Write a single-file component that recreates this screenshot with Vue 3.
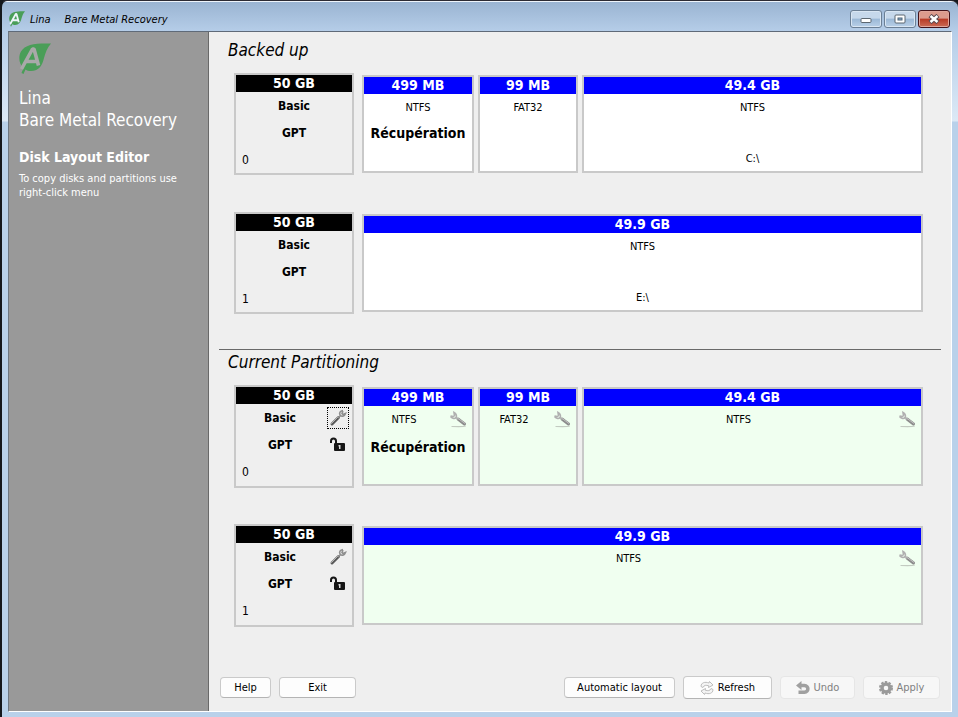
<script setup>
import { h } from 'vue'

const backedUp = [
  {
    id: 0,
    size: '50 GB',
    columns: '112px 100px minmax(0, 1fr)',
    parts: [
      { size: '499 MB', fs: 'NTFS', label: 'Récupération', mount: '' },
      { size: '99 MB', fs: 'FAT32', label: '', mount: '' },
      { size: '49.4 GB', fs: 'NTFS', label: '', mount: 'C:\\' },
    ],
  },
  {
    id: 1,
    size: '50 GB',
    columns: 'minmax(0, 1fr)',
    parts: [{ size: '49.9 GB', fs: 'NTFS', label: '', mount: 'E:\\' }],
  },
]

const current = backedUp.map((disk) => ({
  ...disk,
  parts: disk.parts.map((part) => ({ ...part, mount: '' })),
}))

const sections = [
  { key: 'backup', title: 'Backed up', editable: false, disks: backedUp },
  { key: 'current', title: 'Current Partitioning', editable: true, disks: current },
]

const BrandMark = () =>
  h('svg', { viewBox: '0 0 32 32', 'aria-hidden': 'true' }, [
    h('path', {
      fill: '#4a9e58',
      d: 'M32 0.5C28 5 26.500 10 25 15C23.500 22 20 28 12 28C9.500 28 8 27.500 6.500 26.500L4.500 31L2.500 30L4.500 25C0 21 -1 14 2 8.500C6 1 18 0 32 0.5Z',
    }),
    h('path', {
      fill: 'none',
      stroke: 'var(--mark-cut)',
      'stroke-width': '3.6',
      'stroke-linejoin': 'bevel',
      d: 'M2.500 26L13.500 6H15L19.500 22.500M7 18.500H18',
    }),
  ])

const WrenchIcon = () =>
  h('svg', { viewBox: '0 0 18 18', 'aria-hidden': 'true' }, [
    h('path', {
      fill: 'none',
      stroke: '#5a5a5a',
      'stroke-width': '3',
      'stroke-linecap': 'round',
      d: 'M3 15L9.500 8.500',
    }),
    h('path', {
      fill: 'none',
      stroke: '#b8b8b8',
      'stroke-width': '1',
      'stroke-linecap': 'round',
      d: 'M2.500 14.500L9 8',
    }),
    h('path', {
      fill: 'none',
      stroke: '#8f8f8f',
      'stroke-width': '1.6',
      d: 'M9 9L11.500 6.500M14 1.500C11 2 10 4 11 6C12.500 8 15.500 7.500 16.500 4.500L14 5.500L13 4.500L14 2',
    }),
  ])

const FlatWrenchIcon = () =>
  h('svg', { viewBox: '0 0 18 18', 'aria-hidden': 'true' }, [
    h('path', { fill: '#c3cbc1', d: 'M2 16H14Q17 15.500 17 16.500Q14 17.500 3 17Z' }),
    h('path', {
      fill: 'none',
      stroke: '#8c8c8c',
      'stroke-width': '3',
      'stroke-linecap': 'round',
      d: 'M9 9L15.500 14',
    }),
    h('path', {
      fill: 'none',
      stroke: '#c2c2c2',
      'stroke-width': '1',
      d: 'M8.500 8L16 13.500',
    }),
    h('path', {
      fill: 'none',
      stroke: '#b0b0b0',
      'stroke-width': '1.6',
      d: 'M1.500 6.500C3.500 9 6 9 7 7.500C8 6 7.500 4 5 2.500L5.500 5.500L4.500 6.500L1.500 6M6.500 7L9.500 9.500',
    }),
  ])

const PadlockIcon = () =>
  h('svg', { viewBox: '0 0 18 18', 'aria-hidden': 'true' }, [
    h('path', {
      fill: 'none',
      stroke: '#161616',
      'stroke-width': '2',
      d: 'M2 7V5C2 1.500 7 1.500 7 5V9',
    }),
    h('rect', { x: 5, y: 7, width: 11, height: 8, rx: 1, fill: '#161616' }),
    h('path', { fill: '#dcdcdc', d: 'M9.500 9H11.500V10.500L11.500 13H10V10.500H9.500Z' }),
  ])

const RefreshIcon = () =>
  h('svg', { viewBox: '0 0 14 14', 'aria-hidden': 'true' }, [
    h('path', {
      fill: '#f4f4f4',
      stroke: '#bdbdbd',
      d: 'M1 5.500C1 1.500 5 0.500 9 2L9.500 0.500L13 4L8.500 6.500L8.800 4.800C6 4 4 4 3 6.500Z',
    }),
    h('path', {
      fill: '#f4f4f4',
      stroke: '#bdbdbd',
      d: 'M13 8.500C13 12.500 9 13.500 5 12L4.500 13.500L1 10L5.500 7.500L5.200 9.200C8 10 10 10 11 7.500Z',
    }),
  ])

const UndoIcon = () =>
  h('svg', { viewBox: '0 0 14 14', 'aria-hidden': 'true' }, [
    h('path', { fill: '#a0a0a0', d: 'M0 4.500L5.500 0V9Z' }),
    h('path', {
      fill: 'none',
      stroke: '#a0a0a0',
      'stroke-width': '3.500',
      d: 'M4 4.500H8.500C13 4.500 13 11.200 8.500 11.200H2.500',
    }),
  ])

const GearIcon = () =>
  h('svg', { viewBox: '0 0 14 14', 'aria-hidden': 'true' }, [
    h('circle', { cx: 7, cy: 7, r: 4, fill: 'none', stroke: '#9a9a9a', 'stroke-width': '3.400' }),
    h('circle', {
      cx: 7,
      cy: 7,
      r: 6,
      fill: 'none',
      stroke: '#9a9a9a',
      'stroke-width': '2',
      'stroke-dasharray': '2.400 1.370',
    }),
  ])
</script>

<template>
  <div class="window">
    <header class="titlebar">
      <BrandMark class="titlebar-mark" />
      <span class="caption">Lina</span>
      <span class="caption caption-app">Bare Metal Recovery</span>
      <div class="window-controls">
        <button type="button" class="control" aria-label="Minimize">
          <svg viewBox="0 0 12 10" aria-hidden="true">
            <rect x="1" y="4.500" width="10" height="4" rx="1" fill="#fff" stroke="#5b6670" />
          </svg>
        </button>
        <button type="button" class="control" aria-label="Maximize">
          <svg viewBox="0 0 12 10" aria-hidden="true">
            <rect x="1" y="1" width="10" height="8" rx="1" fill="#fff" stroke="#5b6670" />
            <rect x="4" y="4" width="4" height="2" fill="#8fb0d0" stroke="#4d6479" />
          </svg>
        </button>
        <button type="button" class="control control-close" aria-label="Close">
          <svg viewBox="0 0 12 10" aria-hidden="true">
            <path d="M2 1.500L10 8.500M10 1.500L2 8.500" stroke="#5b4a50" stroke-width="4.500" />
            <path d="M2.500 2L9.500 8M9.500 2L2.500 8" stroke="#fff" stroke-width="2.500" />
          </svg>
        </button>
      </div>
    </header>

    <div class="client">
      <aside class="sidebar">
        <BrandMark class="sidebar-mark" />
        <h1 class="product">Lina<br />Bare Metal Recovery</h1>
        <h2 class="step">Disk Layout Editor</h2>
        <p class="hint">To copy disks and partitions use right-click menu</p>
      </aside>

      <main class="main">
        <section v-for="section in sections" :key="section.key" class="section" :class="section.key">
          <h2 class="section-title">{{ section.title }}</h2>
          <div class="disks">
            <div v-for="disk in section.disks" :key="disk.id" class="disk-row">
              <div class="disk">
                <div class="bar bar-disk">{{ disk.size }}</div>
                <div class="line strong">
                  <span class="text">Basic</span>
                  <button v-if="section.editable" type="button" class="tool" :class="{ focused: disk.id === 0 }" aria-label="Disk tools">
                    <WrenchIcon class="glyph" />
                  </button>
                </div>
                <div class="line strong">
                  <span class="text">GPT</span>
                  <button v-if="section.editable" type="button" class="tool" aria-label="Lock disk">
                    <PadlockIcon class="glyph" />
                  </button>
                </div>
                <div class="line number">{{ disk.id }}</div>
              </div>
              <div class="parts" :style="{ gridTemplateColumns: disk.columns }">
                <div v-for="part in disk.parts" :key="part.size" class="part">
                  <div class="bar">{{ part.size }}</div>
                  <div class="line">
                    <span class="text">{{ part.fs }}</span>
                    <button v-if="section.editable" type="button" class="tool" aria-label="Partition tools">
                      <FlatWrenchIcon class="glyph" />
                    </button>
                  </div>
                  <div class="line label">{{ part.label }}</div>
                  <div class="line mount">{{ part.mount }}</div>
                </div>
              </div>
            </div>
          </div>
        </section>

        <footer class="actions">
          <button type="button" class="btn help">Help</button>
          <button type="button" class="btn exit">Exit</button>
          <span class="spacer"></span>
          <button type="button" class="btn auto">Automatic layout</button>
          <button type="button" class="btn refresh"><RefreshIcon class="btn-icon" />Refresh</button>
          <button type="button" class="btn undo" disabled><UndoIcon class="btn-icon" />Undo</button>
          <button type="button" class="btn apply" disabled><GearIcon class="btn-icon" />Apply</button>
        </footer>
      </main>
    </div>
  </div>
</template>

<style>
body {
  background: #15181d;
}
</style>

<style scoped>
.window {
  box-sizing: border-box;
  display: flex;
  flex-direction: column;
  min-height: 100vh;
  padding: 0 6px 5px;
  border-top: 1px solid #2c2a33;
  border-left: 2px solid #15181d;
  border-radius: 7px 7px 0 0;
  background: linear-gradient(#eef4fb 0 1px, #9ab4d2 1px, #b5cde8 30px, #dce9f6 120px, #b9d1ea 121px);
  font-family: 'DejaVu Sans Condensed', Tahoma, 'DejaVu Sans', sans-serif;
  font-size: 11px;
  color: #000;
}

.titlebar {
  display: flex;
  align-items: center;
  height: 30px;
  padding: 6px 2px 0 1px;
  box-sizing: border-box;
}

.titlebar-mark {
  --mark-cut: #eef5fb;
  width: 16px;
  height: 16px;
  margin-right: 5px;
}

.caption {
  font-size: 11px;
  font-style: italic;
}

.caption-app {
  margin-left: 14px;
}

.window-controls {
  display: flex;
  gap: 2px;
  margin-left: auto;
}

.control {
  display: flex;
  align-items: center;
  justify-content: center;
  width: 32px;
  height: 18px;
  padding: 0;
  border: 1px solid #6b7f95;
  border-radius: 3px;
  background: linear-gradient(#c6d8eb 0 45%, #9bb8d6 50%, #b9d0e8);
  box-shadow: inset 0 0 0 1px #d9e6f3;
}

.control svg {
  width: 12px;
  height: 10px;
}

.control-close {
  border-color: #43131a;
  background: linear-gradient(#dc9b8d 0 45%, #b83a25 50%, #cb6c56);
  box-shadow: inset 0 0 0 1px #e0a69b;
}

.client {
  display: flex;
  flex: 1;
  border: 1px solid;
  border-color: #5f6a78 #fff #fff #6e7781;
  background: #efefef;
}

.sidebar {
  box-sizing: border-box;
  width: 200px;
  flex: none;
  padding: 11px 10px;
  border-right: 1px solid #696969;
  background: #999;
  color: #fff;
}

.sidebar-mark {
  --mark-cut: #a9a9a9;
  display: block;
  width: 32px;
  height: 32px;
}

.product {
  margin: 12px 0 0;
  font-size: 17px;
  line-height: 22px;
  font-weight: normal;
  white-space: nowrap;
}

.step {
  margin: 17px 0 0;
  font-size: 14px;
  line-height: 18px;
  font-weight: bold;
}

.hint {
  margin: 6px 0 0;
  line-height: 14px;
}

.main {
  display: flex;
  flex: 1;
  flex-direction: column;
  min-width: 0;
  padding: 0 10px 12px;
}

.section.current {
  margin-top: 35px;
  border-top: 1px solid #696969;
}

.section-title {
  margin: 0;
  padding: 7px 9px 0;
  font-size: 17px;
  line-height: 22px;
  font-style: italic;
  font-weight: normal;
}

.current .section-title {
  padding-top: 1px;
}

.disks {
  display: grid;
  gap: 37px;
  padding: 12px 18px 0 15px;
}

.current .disks {
  gap: 36px;
}

.disk-row {
  display: flex;
  gap: 8px;
}

.disk,
.part {
  box-sizing: border-box;
  border: 2px solid #c9c9c9;
}

.disk {
  display: grid;
  grid-template-rows: 17px 27px 27px 27px;
  width: 120px;
  flex: none;
}

.current .disk {
  grid-template-rows: 17px 27px 27px 28px;
}

.parts {
  display: grid;
  flex: 1;
  gap: 4px;
  padding: 2px 0;
}

.part {
  display: grid;
  grid-template-rows: 17px 26px 26px 1fr;
  min-width: 0;
  background: #fff;
}

.current .part {
  grid-template-rows: 17px 26px 30px 1fr;
  background: #f0fff0;
}

.bar {
  background: #00f;
  color: #fff;
  font-size: 14px;
  line-height: 17px;
  font-weight: bold;
  text-align: center;
}

.bar-disk {
  background: #000;
}

.line {
  display: flex;
  align-items: center;
  justify-content: center;
  min-width: 0;
}

.text {
  flex: 1;
  text-align: center;
}

.strong {
  font-size: 12px;
  font-weight: bold;
}

.number {
  justify-content: flex-start;
  padding-left: 6px;
  font-size: 12px;
}

.label {
  font-size: 14px;
  font-weight: bold;
  white-space: nowrap;
}

.tool {
  display: flex;
  align-items: center;
  justify-content: center;
  box-sizing: border-box;
  width: 22px;
  height: 22px;
  margin: 0 3px;
  padding: 0;
  border: 1px solid transparent;
  background: none;
}

.tool.focused {
  border: 1px dotted #000;
}

.glyph {
  width: 18px;
  height: 18px;
}

.actions {
  display: flex;
  align-items: center;
  gap: 8px;
  margin-top: auto;
  padding: 0 1px;
}

.spacer {
  flex: 1;
}

.btn {
  display: flex;
  align-items: center;
  justify-content: center;
  gap: 4px;
  box-sizing: border-box;
  height: 21px;
  padding: 0;
  border: 1px solid #cacaca;
  border-bottom-color: #b4b4b4;
  border-radius: 4px;
  background: #fdfdfd;
  color: #000;
  font-family: inherit;
  font-size: 11px;
  white-space: nowrap;
}

.btn:disabled {
  border-color: #e6e6e6;
  background: #f7f7f7;
  color: #808080;
}

.btn-icon {
  width: 14px;
  height: 14px;
}

.help {
  width: 51px;
}

.exit,
.apply {
  width: 77px;
}

.auto {
  width: 111px;
}

.refresh {
  width: 89px;
}

.undo {
  width: 75px;
}

.refresh,
.undo,
.apply {
  height: 23px;
}
</style>
